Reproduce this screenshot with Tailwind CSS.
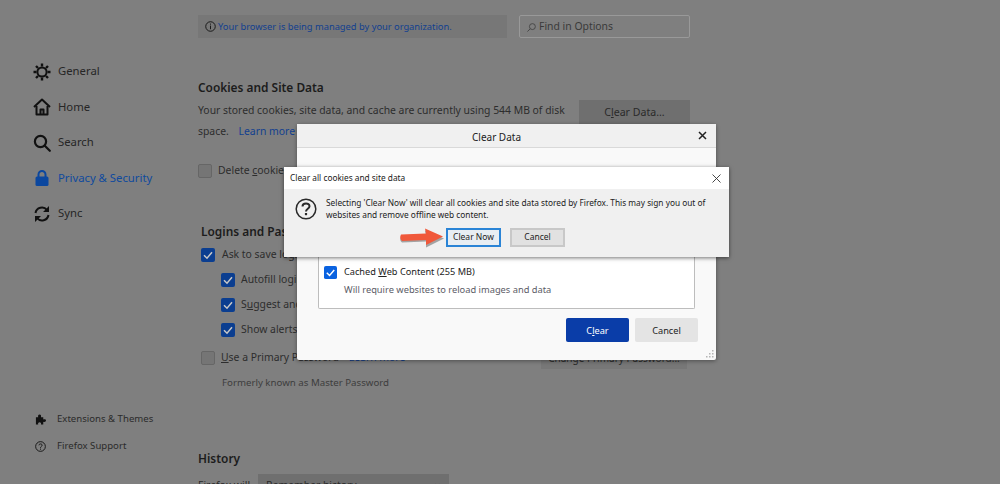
<!DOCTYPE html>
<html lang="en">
<head>
    <meta charset="UTF-8">
    <title>Options</title>
    <script src="https://cdn.jsdelivr.net/npm/@tailwindcss/browser@4"></script>
</head>
<body class="bg-[#7f7f7f] font-['Noto_Sans',sans-serif] text-[#2a2a2a]">
<div class="relative w-[1000px] h-[484px] overflow-hidden flex whitespace-nowrap">

    <!-- sidebar -->
    <aside class="w-[198px] shrink-0 flex flex-col pl-[33px] pt-[54px] text-[11.3px] text-[#262626]">
        <div class="flex items-center gap-[7px] h-[35.5px]">
            <svg class="w-[18px] h-[18px]" viewBox="0 0 18 18" fill="none" stroke="#111" stroke-width="2"><circle cx="9" cy="9" r="4.6"/><path stroke-width="2.4" d="M9 0.5v3M9 14.5v3M0.5 9h3M14.5 9h3M3 3l2 2M13 13l2 2M15 3l-2 2M5 13l-2 2"/></svg>
            <span>General</span>
        </div>
        <div class="flex items-center gap-[7px] h-[35.5px]">
            <svg class="w-[18px] h-[18px]" viewBox="0 0 18 18" fill="none" stroke="#111" stroke-width="2" stroke-linejoin="round"><path d="M1 9l8-7.5L17 9"/><path d="M3.5 8v8.5h11V8"/><path d="M7.5 16.5v-5h3v5"/></svg>
            <span>Home</span>
        </div>
        <div class="flex items-center gap-[7px] h-[35.5px]">
            <svg class="w-[18px] h-[18px]" viewBox="0 0 18 18" fill="none" stroke="#111" stroke-width="2.2" stroke-linecap="round"><circle cx="7.5" cy="7.5" r="5.6"/><path d="M11.8 11.8l5 5"/></svg>
            <span>Search</span>
        </div>
        <div class="flex items-center gap-[7px] h-[35.5px] text-[#0f4a9e]">
            <svg class="w-[18px] h-[18px]" viewBox="0 0 18 18"><path fill="none" stroke="#0b479f" stroke-width="2" d="M5.5 8V5.5a3.5 3.5 0 0 1 7 0V8"/><rect x="2.5" y="7.5" width="13" height="9.5" rx="1.5" fill="#0b479f"/></svg>
            <span>Privacy &amp; Security</span>
        </div>
        <div class="flex items-center gap-[7px] h-[35.5px]">
            <svg class="w-[18px] h-[18px]" viewBox="0 0 18 18" fill="none" stroke="#111" stroke-width="2"><path d="M2.5 8a6.5 6.5 0 0 1 11.5-3"/><path d="M15.5 10a6.5 6.5 0 0 1-11.5 3"/><path fill="#111" stroke="none" d="M16 1v6h-6zM2 17v-6h6z"/></svg>
            <span>Sync</span>
        </div>
        <div class="mt-[174px] flex flex-col text-[9.6px] text-[#2b2b2b]">
            <div class="flex items-center gap-[11px] h-[27px] pl-[2px]">
                <svg class="w-[11px] h-[11px]" viewBox="0 0 12 12" fill="#111"><path d="M1 3.5h2.500C3 2 3.500.5 5 .5S7 2 6.500 3.500H9V6c1.500-.5 3-.2 3 1.200S10.500 9 9 8.500V11.500H6.500C7 10 6.300 9 5 9s-2 1-1.500 2.500H1z"/></svg>
                <span>Extensions &amp; Themes</span>
            </div>
            <div class="flex items-center gap-[11px] h-[27px] pl-[2px]">
                <svg class="w-[11px] h-[11px]" viewBox="0 0 12 12" fill="none" stroke="#111"><circle cx="6" cy="6" r="5.3"/><path d="M4.3 4.700C4.300 2.700 7.800 2.700 7.800 4.600 7.800 5.900 6 5.900 6 7.400"/><path d="M6 8.300v1.200"/></svg>
                <span>Firefox Support</span>
            </div>
        </div>
    </aside>

    <!-- main content behind the dialogs -->
    <main class="w-[492px] shrink-0 pt-[15px]">
        <div class="flex gap-[12px]">
            <div class="w-[309px] h-[23px] bg-[#777777] flex items-center pl-[7px] gap-[2px] text-[9.3px] text-[#12408f]">
                <svg class="w-[11px] h-[11px] shrink-0" viewBox="0 0 12 12" fill="none" stroke="#111"><circle cx="6" cy="6" r="5.2"/><path d="M6 5v4M6 2.800v1.200"/></svg>
                <span>Your browser is being managed by your organization.</span>
            </div>
            <div class="w-[171px] h-[23px] pt-[1px] border border-[#999999] rounded-[2px] flex items-center pl-[7px] gap-[3px] text-[#3a3a3a] text-[10.4px]">
                <svg class="w-[9px] h-[9px]" viewBox="0 0 10 10" fill="none" stroke="#444"><circle cx="6" cy="4" r="3.3"/><path d="M3.500 6.500L.5 9.500"/></svg>
                <span>Find in Options</span>
            </div>
        </div>

        <h2 class="mt-[39px] text-[11.9px] font-semibold leading-[20px] text-[#1c1c1c]">Cookies and Site Data</h2>
        <div class="flex justify-between mt-[3px]">
            <p class="leading-[21px] text-[10.4px] text-[#2d2d2d]">Your stored cookies, site data, and cache are currently using 544 MB of disk<br>space. <span class="ml-[7px] text-[#12408f]">Learn more</span></p>
            <div class="w-[111px] h-[26px] bg-[#6f6f6f] flex items-center justify-center text-[10.6px]"><span>C<u>l</u>ear Data...</span></div>
        </div>
        <div class="flex items-center gap-[6px] mt-[20px] h-[18px]">
            <span class="w-[14px] h-[14px] border border-[#666666] bg-[#757575] rounded-[2px]"></span>
            <span class="text-[#2d2d2d] text-[10.4px]">Delete <u>c</u>ookies</span>
        </div>

        <h2 class="mt-[41px] ml-[3px] text-[11.9px] font-semibold leading-[20px] text-[#1c1c1c]">Logins and Passwords</h2>
        <div class="ml-[3px] mt-[1px] flex flex-col text-[10.4px] text-[#2d2d2d]">
            <div class="flex items-center gap-[7px] h-[25px]">
                <svg class="w-[14px] h-[14px]" viewBox="0 0 14 14"><rect width="14" height="14" rx="2" fill="#0b3e90"/><path d="M3 7.200l3 3 5-6" fill="none" stroke="#c8c8c8" stroke-width="1.5"/></svg>
                <span>Ask to save logins</span>
            </div>
            <div class="flex items-center gap-[6px] h-[25px] pl-[20px]">
                <svg class="w-[14px] h-[14px]" viewBox="0 0 14 14"><rect width="14" height="14" rx="2" fill="#0b3e90"/><path d="M3 7.200l3 3 5-6" fill="none" stroke="#c8c8c8" stroke-width="1.5"/></svg>
                <span>Autof<u>i</u>ll logins</span>
            </div>
            <div class="flex items-center gap-[6px] h-[25px] pl-[20px]">
                <svg class="w-[14px] h-[14px]" viewBox="0 0 14 14"><rect width="14" height="14" rx="2" fill="#0b3e90"/><path d="M3 7.200l3 3 5-6" fill="none" stroke="#c8c8c8" stroke-width="1.5"/></svg>
                <span>S<u>u</u>ggest and generate</span>
            </div>
            <div class="flex items-center gap-[6px] h-[25px] pl-[20px]">
                <svg class="w-[14px] h-[14px]" viewBox="0 0 14 14"><rect width="14" height="14" rx="2" fill="#0b3e90"/><path d="M3 7.200l3 3 5-6" fill="none" stroke="#c8c8c8" stroke-width="1.5"/></svg>
                <span>Show alerts about</span>
            </div>
            <div class="flex items-center gap-[6px] h-[32px]">
                <span class="w-[14px] h-[14px] border border-[#666666] bg-[#757575] rounded-[2px]"></span>
                <span><u>U</u>se a Primary Password</span>
                <span class="ml-[4px] text-[#12408f]">Learn more</span>
                <div class="ml-auto mr-[3px] w-[146px] h-[22px] bg-[#777777] flex items-center justify-center text-[10px]">Change Primary Password...</div>
            </div>
            <p class="pl-[21px] mt-[-1px] leading-[20px] text-[9.7px] text-[#3d3d3d]">Formerly known as Master Password</p>
        </div>

        <h2 class="mt-[55px] text-[11.9px] font-semibold leading-[20px] text-[#1c1c1c]">History</h2>
        <div class="flex items-center gap-[8px] mt-[6px] text-[10.4px]">
            <span>Firefox will</span>
            <div class="w-[191px] h-[24px] bg-[#6f6f6f] flex items-center justify-between px-[8px]"><span>Remember history</span><span class="text-[8px]">&#10005;</span></div>
        </div>
    </main>

    <!-- Clear Data dialog -->
    <div class="absolute left-[297px] top-[124px] w-[419px] h-[236px] bg-[#f9f9f9] rounded-[2px] shadow-[0_1px_4px_rgba(0,0,0,0.4)] flex flex-col">
        <div class="h-[24px] pt-[3px] pr-[20px] bg-[#f0f0f0] border-b border-[#d9d9d9] relative flex items-center justify-center text-[10px] text-[#222222]">
            <span>Clear Data</span>
            <svg class="absolute right-[9px] top-[7px] w-[9px] h-[9px]" viewBox="0 0 9 9" stroke="#222" stroke-width="1.5"><path d="M1 1l7 7M8 1l-7 7"/></svg>
        </div>
        <div class="mt-[88px] mx-[21px] h-[73px] border border-[#bdbdbd] border-t-0 rounded-b-[2px] bg-white pt-[27px] px-[5px]">
            <div class="flex items-center gap-[7px] h-[18px] text-[9.2px] text-[#222222]">
                <svg class="w-[13px] h-[13px]" viewBox="0 0 14 14"><rect width="14" height="14" rx="2" fill="#0a62e0"/><path d="M3 7.200l3 3 5-6" fill="none" stroke="#fff" stroke-width="1.6"/></svg>
                <span>Cached <u>W</u>eb Content (255 MB)</span>
            </div>
            <p class="pl-[20px] mt-[2px] text-[9.3px] text-[#5b5b66] leading-[14px]">Will require websites to reload images and data</p>
        </div>
        <div class="flex justify-end gap-[6px] mt-[9px] mr-[18px] text-[9.2px]">
            <div class="w-[63px] h-[24px] pt-[1px] bg-[#0a3da8] rounded-[2px] text-white flex items-center justify-center"><span>C<u>l</u>ear</span></div>
            <div class="w-[63px] h-[24px] pt-[1px] bg-[#e4e4e4] rounded-[2px] flex items-center justify-center text-[#222222]">Cancel</div>
        </div>
        <svg class="absolute right-[2px] bottom-[2px] w-[8px] h-[8px]" viewBox="0 0 8 8" fill="#b5b5b5"><rect x="6" y="0" width="1.5" height="1.5"/><rect x="3" y="3" width="1.5" height="1.5"/><rect x="6" y="3" width="1.5" height="1.5"/><rect x="0" y="6" width="1.5" height="1.5"/><rect x="3" y="6" width="1.5" height="1.5"/><rect x="6" y="6" width="1.5" height="1.5"/></svg>
    </div>

    <!-- confirm prompt -->
    <div class="absolute left-[284px] top-[167px] w-[445px] h-[90px] bg-[#f0f0f0] shadow-[0_1px_4px_rgba(0,0,0,0.55)] flex flex-col">
        <div class="h-[22px] bg-white flex items-center justify-between pl-[6px] pr-[8px] text-[8.3px] text-[#1a1a1a]">
            <span>Clear all cookies and site data</span>
            <svg class="w-[9px] h-[9px]" viewBox="0 0 9 9" stroke="#333" stroke-width="0.9"><path d="M0.5 0.5l8 8M8.5 0.5l-8 8"/></svg>
        </div>
        <div class="flex gap-[9px] pl-[11px] pt-[8px]">
            <svg class="w-[22px] h-[22px] mt-[1px] shrink-0" viewBox="0 0 22 22" fill="none" stroke="#2a2a2a"><circle cx="11" cy="11" r="9.8" stroke-width="1.5"/><path stroke-width="2" d="M7.500 8.500C7.500 4.500 14.500 4.500 14.500 8.300 14.500 10.800 11 10.800 11 13.500"/><path stroke-width="2.2" d="M11 15v2.200"/></svg>
            <p class="text-[8.3px] leading-[12px] text-[#222222]">Selecting 'Clear Now' will clear all cookies and site data stored by Firefox. This may sign you out of<br>websites and remove offline web content.</p>
        </div>
        <div class="flex items-center mt-[7px] text-[8.5px] text-[#222222] pl-[162px] gap-[9px]">
            <div class="w-[55px] h-[19px] bg-[#e8eef3] border-2 border-[#2a84d6] flex items-center justify-center">Clear Now</div>
            <div class="w-[55px] h-[19px] bg-[#e1e1e1] border-2 border-[#c8c8c8] flex items-center justify-center">Cancel</div>
        </div>
    </div>

    <!-- red arrow annotation -->
    <svg class="absolute left-[398px] top-[227px] w-[48px] h-[22px]" viewBox="0 0 48 22">
        <path d="M3 8.500L28 7.500 27 2 46 10 28 19 28 13 4 14Q1 11.500 3 8.500Z" fill="#555" opacity="0.5" transform="translate(0 1.500)"/>
        <path d="M3 7.500L28 6.500 27 1.500 45 9.500 28 18 28 13 4 14Q1 11 3 7.500Z" fill="#f0583a"/>
    </svg>
</div>
</body>
</html>
